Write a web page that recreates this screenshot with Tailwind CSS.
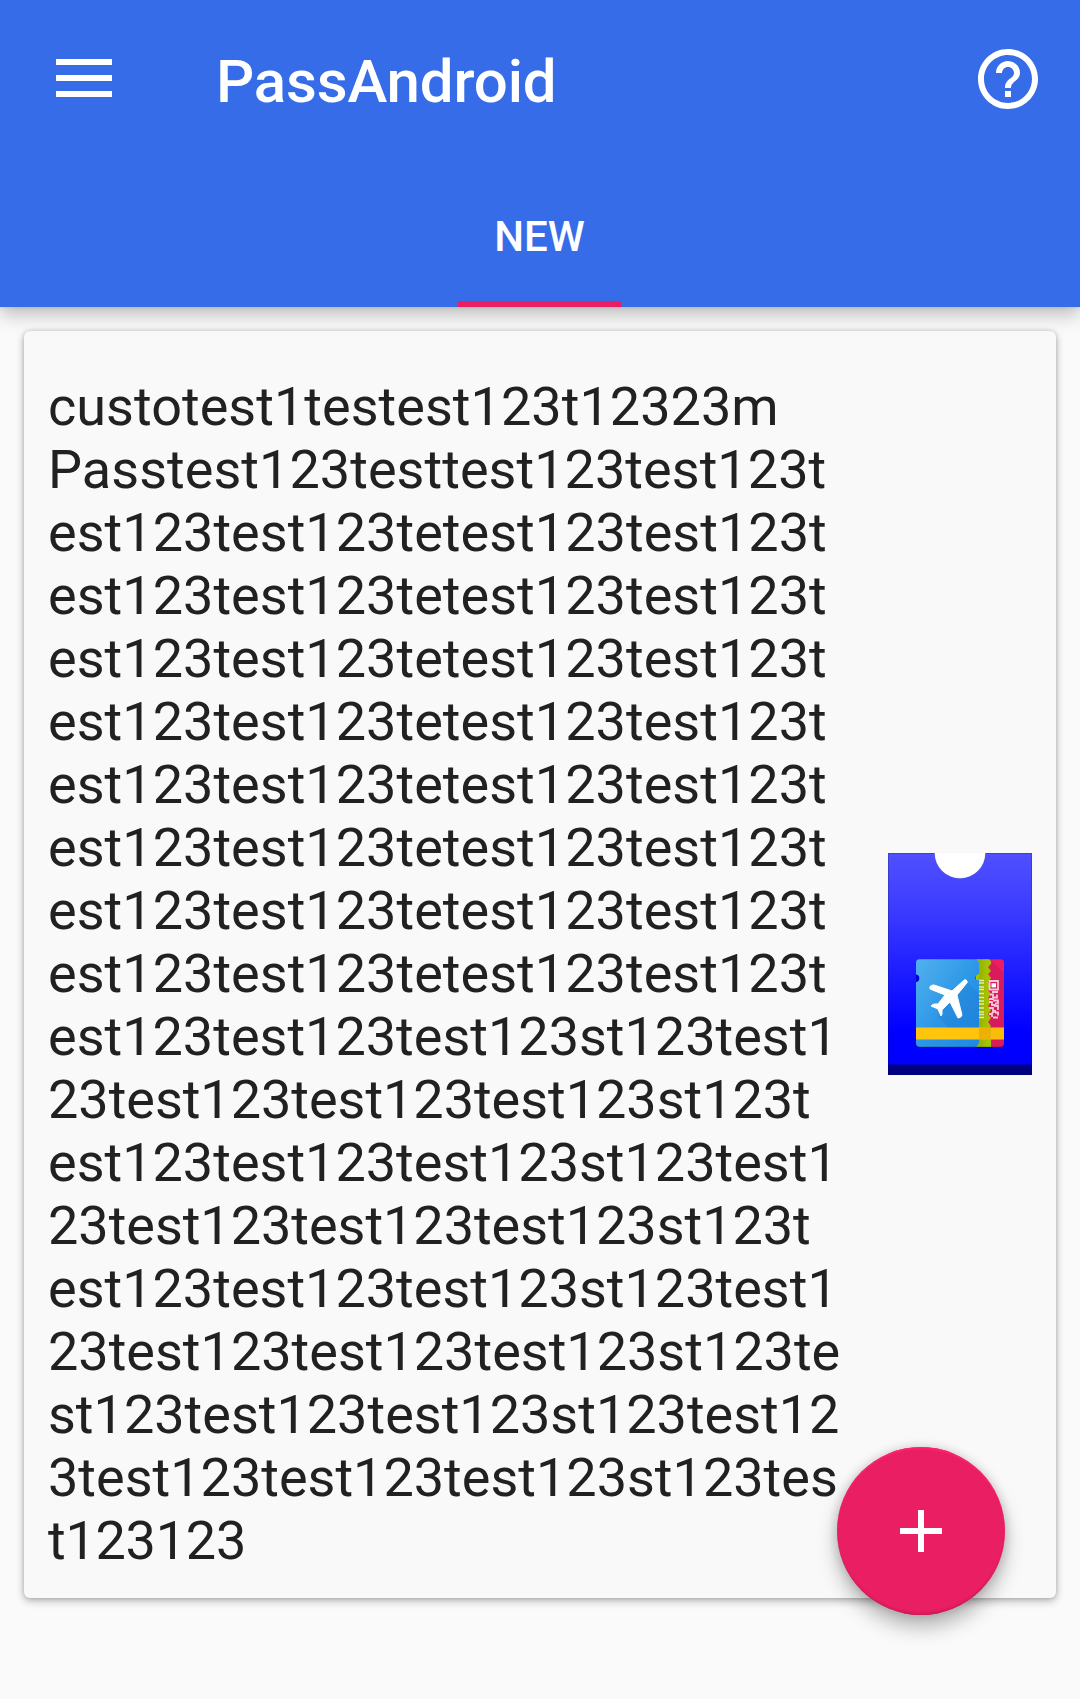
<!DOCTYPE html>
<html lang="en">
<head>
<meta charset="utf-8">
<title>PassAndroid</title>
<script src="https://cdn.jsdelivr.net/npm/@tailwindcss/browser@4"></script>
</head>
<body class="h-[1699px] w-[1080px] overflow-hidden bg-[#fafafa] font-['Roboto',sans-serif]">
<header class="relative flex h-[307px] flex-col bg-[#366ce8] text-white shadow-[0_7px_18px_rgba(0,0,0,0.26),0_0_4px_rgba(0,0,0,0.12)]">
  <div class="flex h-[163px] items-start pr-9 pl-14">
    <button class="mt-[59px] flex w-14 flex-col gap-2.5" aria-label="Menu">
      <span class="h-1.5 w-full bg-white"></span>
      <span class="h-1.5 w-full bg-white"></span>
      <span class="h-1.5 w-full bg-white"></span>
    </button>
    <h1 class="mt-[47px] ml-[104px] text-[60px] leading-[70px] font-medium tracking-[-0.15px]">PassAndroid</h1>
    <svg class="mt-[43px] ml-auto size-[72px]" viewBox="0 0 24 24" fill="currentColor"><path d="M11 18h2v-2h-2v2zm1-16C6.48 2 2 6.48 2 12s4.480 10 10 10 10-4.480 10-10S17.520 2 12 2zm0 18c-4.410 0-8-3.590-8-8s3.590-8 8-8 8 3.590 8 8-3.590 8-8 8zm0-14c-2.210 0-4 1.790-4 4h2c0-1.100.9-2 2-2s2 .9 2 2c0 2-3 1.750-3 5h2c0-2.250 3-2.500 3-5 0-2.210-1.790-4-4-4z"/></svg>
  </div>
  <nav class="flex h-36 justify-center">
    <div class="mr-px flex w-[163px] flex-col items-center justify-between border-b-6 border-[#e91e63] pt-[49px] text-[42px] leading-[49px] font-medium">NEW</div>
  </nav>
</header>
<main class="px-6 pt-6">
  <article class="flex h-[1267px] items-center justify-between rounded-[6px] bg-[#f9f9f9] px-6 shadow-[0_3px_8px_rgba(0,0,0,0.28),0_0_4px_rgba(0,0,0,0.16)]">
    <div class="mt-[18px] text-[54px] leading-[63px] whitespace-nowrap text-[#212121]">
      <p class="tracking-[0.03px]">custotest1testest123t12323m</p>
      <p class="tracking-[0.04px]">Passtest123testtest123test123t</p>
      <p class="tracking-[0.03px]">est123test123tetest123test123t</p>
      <p class="tracking-[0.03px]">est123test123tetest123test123t</p>
      <p class="tracking-[0.03px]">est123test123tetest123test123t</p>
      <p class="tracking-[0.03px]">est123test123tetest123test123t</p>
      <p class="tracking-[0.03px]">est123test123tetest123test123t</p>
      <p class="tracking-[0.03px]">est123test123tetest123test123t</p>
      <p class="tracking-[0.03px]">est123test123tetest123test123t</p>
      <p class="tracking-[0.03px]">est123test123tetest123test123t</p>
      <p>est123test123test123st123test1</p>
      <p class="tracking-[-0.03px]">23test123test123test123st123t</p>
      <p>est123test123test123st123test1</p>
      <p class="tracking-[-0.03px]">23test123test123test123st123t</p>
      <p>est123test123test123st123test1</p>
      <p>23test123test123test123st123te</p>
      <p>st123test123test123st123test12</p>
      <p>3test123test123test123st123tes</p>
      <p class="tracking-[-0.25px]">t123123</p>
    </div>
    <svg class="mb-px h-[222px] w-36 shrink-0" viewBox="0 0 144 222">
      <defs>
        <linearGradient id="sleeve" x1="0" y1="0" x2="0" y2="1"><stop offset="0" stop-color="#5050ff"/><stop offset=".25" stop-color="#3c3cff"/><stop offset=".8" stop-color="#0000ff"/></linearGradient>
        <linearGradient id="sky" x1="0" y1="0" x2="1" y2="1"><stop offset="0" stop-color="#52b1ee"/><stop offset=".55" stop-color="#2b96e6"/><stop offset="1" stop-color="#1e88e5"/></linearGradient>
        <linearGradient id="shade" x1="0" x2="1"><stop offset="0" stop-color="#000" stop-opacity=".1"/><stop offset="1" stop-color="#000" stop-opacity="0"/></linearGradient>
        <clipPath id="ticket"><rect x="28" y="106" width="88" height="88" rx="4"/></clipPath>
      </defs>
      <rect width="144" height="222" fill="url(#sleeve)"/>
      <path d="M.5 212V.5h143V212" fill="none" stroke="#000" stroke-opacity=".18"/>
      <rect y="211.500" width="144" height="10.500" fill="#000080"/>
      <circle cx="72" cy="0" r="25.500" fill="#fff" stroke="#000080" stroke-opacity=".25" stroke-width=".8"/>
      <g clip-path="url(#ticket)">
        <rect x="90" y="106" width="26" height="88" fill="#e91e63"/>
        <path d="M102 106l14 14v74H102z" fill="#000" opacity=".07"/>
        <path d="M88 106h13q3 2 2 5l-3 3 3 4-3 3 3 4-3 4 3 4-3 4 3 4-3 4 3 4-3 4 3 4-3 4 3 4-3 4 3 4-3 4 3 4v13q0 3-3 4H88z" fill="#a4c400"/>
        <rect x="91" y="106" width="8" height="88" fill="url(#shade)"/>
        <path d="M28 106h60q3 1 3 4v11a4 4 0 0 0-3 6h3v61q0 5-3 6H28v-65a3.800 3.800 0 0 0 0-7.500z" fill="url(#sky)"/>
        <path d="M79 129l12 12v34H61L49 163l15-18z" fill="#1565c0" opacity=".18"/>
        <rect x="28" y="174.500" width="88" height="12" fill="#ffc40c"/>
        <rect x="91" y="174.500" width="12" height="12" fill="#d49a00" opacity=".45"/>
        <rect x="103" y="174.500" width="13" height="12" fill="#d49a00" opacity=".15"/>
        <path d="M28 106.500h88M28 193.500h88" stroke="#000" stroke-opacity=".12"/>
      </g>
      <path d="M28 121.500a3.800 3.800 0 0 1 0 7.500z" fill="#0000d8"/>
      <path d="M75 128q3-3 4 0 1 1-1 3L69 142l5 20q-1 3-4 3L62 149l-8 8v4l-1 2-3-7-7-3q1-2 4-2h3l7-9-15-6q-1-4 4-4l18 6z" fill="#fff" stroke="#fff" stroke-linejoin="round"/>
      <path d="M91 127.500h5M91 130h5M91 134h5M91 136.500h5M91 140.500h5M91 144.500h5M91 148h5M91 151h5M91 155h5M91 159h5M91 161.500h5M91 164.500h5" stroke="#fff" stroke-opacity=".7" stroke-width="1.500"/>
      <path d="M101.500 128H110v8.500h-8.500z" fill="none" stroke="#f8c7d8" stroke-width="1.800"/>
      <path d="M103.500 130.200h4.500v4.200h-4.500z" fill="#fff"/>
      <path d="M104 139h6M102 141.500h3v3h4v-3M101 146h4v-3M105 147.500h5v3h-3M101 149h3v3h3v2M108 153h2v4M101 155h4v3h3M103 161l4-3M107 159.500h3v3M101 161h3v3M105 164.500h5" fill="none" stroke="#f8c7d8" stroke-width="1.800"/>
    </svg>
  </article>
</main>
<button aria-label="Add pass" class="fixed top-[1447px] left-[837px] flex size-[168px] items-center justify-center rounded-full bg-[#e91e63] text-white shadow-[0_12px_20px_rgba(0,0,0,0.28),0_0_12px_rgba(0,0,0,0.16),inset_0_3px_2px_-1px_#ff2470,inset_0_-3px_2px_-1px_#cf1b58]">
  <svg class="size-[72px]" viewBox="0 0 24 24" fill="currentColor" shape-rendering="crispEdges"><path d="M19 13h-6v6h-2v-6H5v-2h6V5h2v6h6v2z"/></svg>
</button>
</body>
</html>
